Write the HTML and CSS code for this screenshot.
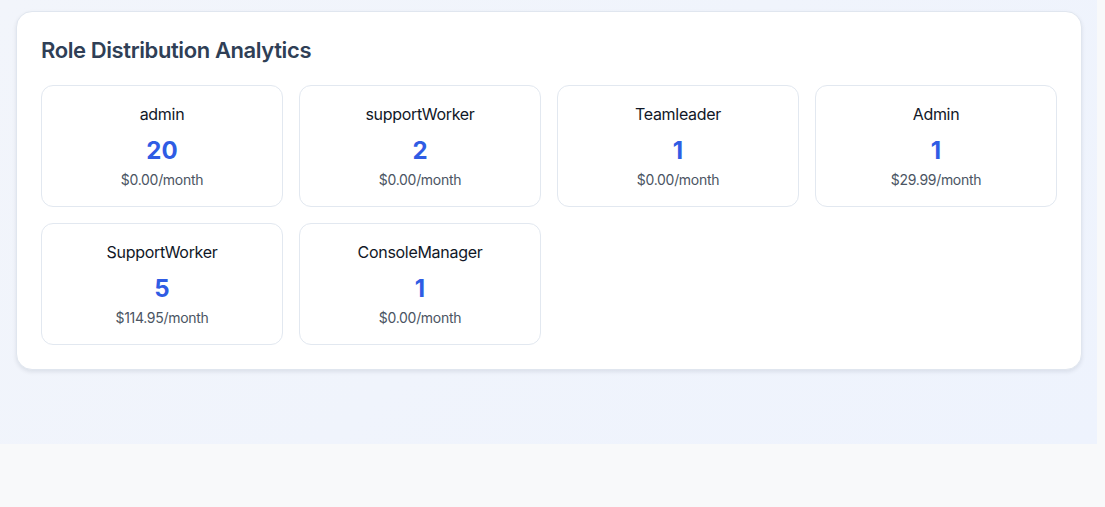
FILE: index.html
```html
<!DOCTYPE html>
<html>
<head>
<meta charset="utf-8">
<link rel="stylesheet" href="styles.css">
</head>
<body>
<div class="page">
  <section class="panel">
    <h2 class="title">Role Distribution Analytics</h2>
    <div class="grid">
      <div class="card"><div class="name">admin</div><div class="count">20</div><div class="price">$0.00/month</div></div>
      <div class="card"><div class="name">supportWorker</div><div class="count">2</div><div class="price">$0.00/month</div></div>
      <div class="card"><div class="name">Teamleader</div><div class="count">1</div><div class="price">$0.00/month</div></div>
      <div class="card"><div class="name">Admin</div><div class="count">1</div><div class="price">$29.99/month</div></div>
      <div class="card"><div class="name">SupportWorker</div><div class="count">5</div><div class="price">$114.95/month</div></div>
      <div class="card"><div class="name">ConsoleManager</div><div class="count">1</div><div class="price">$0.00/month</div></div>
    </div>
  </section>
</div>
</body>
</html>
```
FILE: styles.css
```css
html, body {
  margin: 0;
  padding: 0;
  background: #f8f9fa;
  font-family: Inter, "Noto Sans", sans-serif;
}
.page {
  width: 1097px;
  height: 444px;
  box-sizing: border-box;
  padding: 11px 15px 0 16px;
  background: linear-gradient(135deg, #f2f5fb 0%, #eef3fd 100%);
}
.panel {
  width: 1066px;
  box-sizing: border-box;
  background: #fff;
  border: 1px solid #e0e6ef;
  border-radius: 16px;
  padding: 24px 24px 24px;
  box-shadow: 0 2px 4px rgba(15, 23, 42, 0.09);
}
.title {
  margin: 0 0 21px;
  font-size: 22px;
  line-height: 28px;
  font-weight: 600;
  color: #2f3f56;
  letter-spacing: -0.4px;
}
.grid {
  display: grid;
  grid-template-columns: repeat(4, 242px);
  gap: 16px;
}
.card {
  height: 122px;
  box-sizing: border-box;
  border: 1px solid #e2e8f0;
  border-radius: 12px;
  padding: 16px;
  text-align: center;
}
.name {
  font-size: 16px;
  line-height: 24px;
  color: #111827;
  margin-bottom: 9px;
  letter-spacing: -0.3px;
}
.count {
  font-size: 24px;
  line-height: 32px;
  font-weight: 700;
  color: #2f5ce4;
  margin-bottom: 3px;
}
.price {
  font-size: 14px;
  line-height: 20px;
  color: #4b5563;
  letter-spacing: -0.3px;
}
```
